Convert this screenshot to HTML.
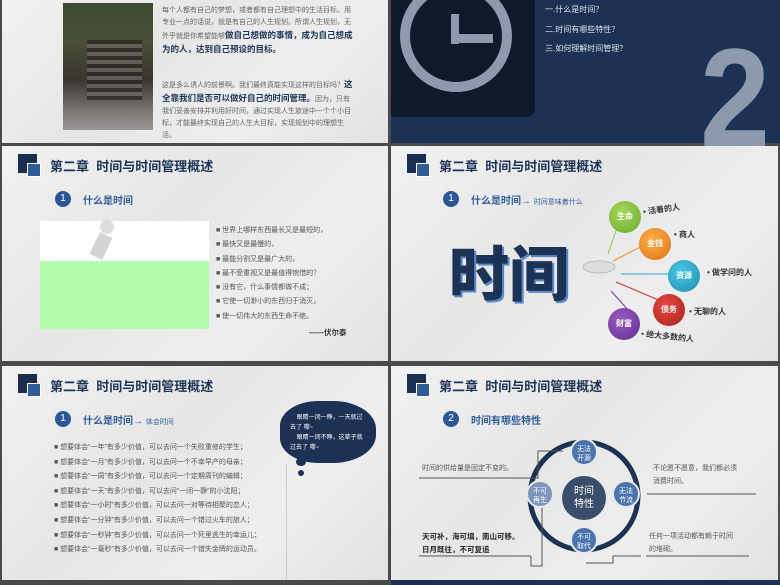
<!DOCTYPE html>
<html><head><meta charset="utf-8"><style>
*{margin:0;padding:0;box-sizing:border-box}
body{width:780px;height:585px;background:#4a4a4a;position:relative;overflow:hidden;font-family:"Liberation Sans","Noto Sans CJK SC",sans-serif}
.p{position:absolute;background:linear-gradient(135deg,#f1f1f1 0%,#e6e6e6 40%,#eeeeee 70%,#e2e2e2 100%);overflow:hidden}
.a{position:absolute;white-space:nowrap}
.hd{position:absolute;left:16px;top:8px}
.hd .s1{position:absolute;left:0;top:0;width:19px;height:19px;background:#1b2e4f}
.hd .s2{position:absolute;left:9px;top:9px;width:14px;height:14px;background:#2f5d9a;border:1px solid #fff}
.hd .t{position:absolute;left:32px;top:2px;font-size:13px;font-weight:bold;color:#1d3356;white-space:nowrap}
.num{position:absolute;width:16px;height:16px;border-radius:50%;background:#2b5796;color:#fff;font-size:10px;text-align:center;line-height:16px}
.sub{position:absolute;font-size:10px;font-weight:bold;color:#2f5d9a;white-space:nowrap}
.li{font-size:7px;color:#555;line-height:14.3px;white-space:nowrap}
.ci{position:absolute;border-radius:50%;color:#fff;font-size:8px;font-weight:bold;text-align:center}
</style></head><body>

<!-- top-left -->
<div class="p" style="left:2px;top:0;width:386px;height:143px">
  <div class="a" style="left:61px;top:3px;width:90px;height:127px;background:linear-gradient(180deg,#3c4a32 0%,#4a5038 30%,#3a3530 60%,#7a7672 85%,#9a9896 100%)"></div>
  <div class="a" style="left:85px;top:40px;width:55px;height:60px;background:repeating-linear-gradient(180deg,#2a2825 0 4px,#6a655f 4px 8px);opacity:.8"></div>
  <div class="a" style="left:160px;top:5px;font-size:7px;color:#666;line-height:12px;white-space:normal;width:192px">每个人都有自己的梦想，或者都有自己理想中的生活目标。用专业一点的话说，就是有自己的人生规划。所谓人生规划，无外乎就是你希望能够<b style="color:#1d3356;font-size:8.5px">做自己想做的事情，成为自己想成为的人，达到自己预设的目标。</b></div>
  <div class="a" style="left:160px;top:78px;font-size:7px;color:#666;line-height:12px;white-space:normal;width:192px">这是多么诱人的前景啊。我们最终真能实现这样的目标吗？<b style="color:#1d3356;font-size:8.5px">这全靠我们是否可以做好自己的时间管理。</b>因为，只有我们妥善安排并利用好时间，通过实现人生旅途中一个个小目标，才能最终实现自己的人生大目标，实现规划中的理想生活。</div>
</div>

<!-- top-right -->
<div class="a" style="left:391px;top:0;width:389px;height:143px;background:#1c3153"></div>
<div class="a" style="left:391px;top:0;width:144px;height:117px;background:#0e1a2c;border-radius:0 0 8px 0"></div>
<div class="a" style="left:400px;top:-20px;width:112px;height:112px;border:10px solid #8d9aad;border-radius:50%"></div>
<div class="a" style="left:451px;top:14px;width:8px;height:30px;background:#8d9aad"></div>
<div class="a" style="left:451px;top:34px;width:42px;height:9px;background:#8d9aad"></div>
<div class="a" style="left:545px;top:0;font-size:8px;color:#dde3ec;line-height:19.5px;white-space:nowrap">一.什么是时间？<br>二.时间有哪些特性？<br>三.如何理解时间管理？</div>
<div class="a" style="left:700px;top:28px;font-size:140px;font-weight:bold;color:#8d9aad;line-height:140px;transform:scaleX(.9);transform-origin:left">2</div>

<!-- middle-left -->
<div class="p" style="left:2px;top:146px;width:386px;height:215px">
  <div class="hd"><div class="s1"></div><div class="s2"></div><div class="t">第二章&nbsp;&nbsp;时间与时间管理概述</div></div>
  <div class="num" style="left:53px;top:45px">1</div>
  <div class="sub" style="left:81px;top:46px">什么是时间</div>
  <div class="a" style="left:38px;top:75px;width:169px;height:40px;background:#fff"></div>
  <div class="a" style="left:98px;top:74px;width:14px;height:14px;border-radius:50%;background:#ddd"></div>
  <div class="a" style="left:92px;top:88px;width:14px;height:24px;background:#d4d4d4;transform:rotate(25deg)"></div>
  <div class="a" style="left:38px;top:115px;width:169px;height:68px;background:#b3fcab"></div>
  <div class="a li" style="left:214px;top:78px">■ 世界上哪样东西最长又是最短的，<br>■ 最快又是最慢的，<br>■ 最能分割又是最广大的，<br>■ 最不受重视又是最值得惋惜的？<br>■ 没有它，什么事情都做不成；<br>■ 它使一切渺小的东西归于消灭，<br>■ 使一切伟大的东西生命不绝。</div>
  <div class="a" style="left:307px;top:181px;font-size:7.5px;font-weight:bold;color:#333">——伏尔泰</div>
</div>

<!-- middle-right -->
<div class="p" style="left:391px;top:146px;width:387px;height:215px">
  <div class="hd"><div class="s1"></div><div class="s2"></div><div class="t">第二章&nbsp;&nbsp;时间与时间管理概述</div></div>
  <div class="num" style="left:52px;top:45px">1</div>
  <div class="sub" style="left:80px;top:46px">什么是时间→ <span style="font-weight:normal;font-size:7px">时间意味着什么</span></div>
  <div class="a" style="left:58px;top:95px;font-size:60px;font-weight:900;color:#1d3356;text-shadow:2px 2px 0 #5a88c8;line-height:70px">时间</div>
  <svg class="a" style="left:0;top:0" width="387" height="215">
    <line x1="217" y1="108" x2="230" y2="70" stroke="#8dc63f"/>
    <line x1="222" y1="115" x2="255" y2="98" stroke="#f08a24"/>
    <line x1="230" y1="128" x2="280" y2="128" stroke="#2aa8c8"/>
    <line x1="225" y1="136" x2="270" y2="155" stroke="#d0312d"/>
    <line x1="220" y1="145" x2="238" y2="165" stroke="#6a3d9a"/>
    <ellipse cx="208" cy="121" rx="16" ry="6" fill="#ddd" stroke="#bbb"/>
  </svg>
  <div class="ci" style="left:218px;top:55px;width:32px;height:32px;line-height:32px;background:radial-gradient(circle at 40% 35%,#a6d95b,#6aa72a)">生命</div>
  <div class="ci" style="left:248px;top:82px;width:32px;height:32px;line-height:32px;background:radial-gradient(circle at 40% 35%,#ffae4a,#e07010)">金钱</div>
  <div class="ci" style="left:277px;top:114px;width:32px;height:32px;line-height:32px;background:radial-gradient(circle at 40% 35%,#4cc6e3,#1a8fb0)">资源</div>
  <div class="ci" style="left:262px;top:148px;width:32px;height:32px;line-height:32px;background:radial-gradient(circle at 40% 35%,#e84a42,#a8201c)">债务</div>
  <div class="ci" style="left:217px;top:162px;width:32px;height:32px;line-height:32px;background:radial-gradient(circle at 40% 35%,#9a5cc6,#5f2d8f)">财富</div>
  <div class="a" style="left:252px;top:58px;font-size:8px;font-weight:bold;color:#333;transform:rotate(-8deg)">• 活着的人</div>
  <div class="a" style="left:283px;top:83px;font-size:8px;font-weight:bold;color:#333">• 商人</div>
  <div class="a" style="left:316px;top:121px;font-size:8px;font-weight:bold;color:#333">• 做学问的人</div>
  <div class="a" style="left:298px;top:160px;font-size:8px;font-weight:bold;color:#333">• 无聊的人</div>
  <div class="a" style="left:250px;top:185px;font-size:8px;font-weight:bold;color:#333;transform:rotate(6deg)">• 绝大多数的人</div>
</div>

<!-- bottom-left -->
<div class="p" style="left:2px;top:366px;width:386px;height:214px">
  <div class="hd"><div class="s1"></div><div class="s2"></div><div class="t">第二章&nbsp;&nbsp;时间与时间管理概述</div></div>
  <div class="num" style="left:53px;top:45px">1</div>
  <div class="sub" style="left:81px;top:46px">什么是时间→ <span style="font-weight:normal;font-size:7px">体会时间</span></div>
  <div class="a li" style="left:52px;top:75px;line-height:14.6px">■ 想要体会“一年”有多少价值，可以去问一个失败重修的学生；<br>■ 想要体会“一月”有多少价值，可以去问一个不幸早产的母亲；<br>■ 想要体会“一周”有多少价值，可以去问一个定期周刊的编辑；<br>■ 想要体会“一天”有多少价值，可以去问“一闭一静”的小沈阳；<br>■ 想要体会“一小时”有多少价值，可以去问一对等待相聚的恋人；<br>■ 想要体会“一分钟”有多少价值，可以去问一个错过火车的旅人；<br>■ 想要体会“一秒钟”有多少价值，可以去问一个死里逃生的幸运儿；<br>■ 想要体会“一毫秒”有多少价值，可以去问一个错失金牌的运动员。</div>
  <div class="a" style="left:284px;top:98px;width:86px;height:118px;border-left:1px solid #ccc"></div>
  <div class="a" style="left:278px;top:35px;width:96px;height:62px;background:#1c3153;border-radius:40% 45% 45% 40%"></div>
  <div class="a" style="left:294px;top:92px;width:10px;height:8px;background:#1c3153;border-radius:50%"></div>
  <div class="a" style="left:296px;top:104px;width:6px;height:6px;background:#1c3153;border-radius:50%"></div>
  <div class="a" style="left:288px;top:47px;font-size:6px;color:#fff;line-height:10px;width:78px;white-space:normal">&nbsp;&nbsp;&nbsp;&nbsp;眼睛一闭一睁，一天就过去了 嚟~<br>&nbsp;&nbsp;&nbsp;&nbsp;眼睛一闭不睁，这辈子就过去了 嚟~</div>
</div>

<!-- bottom-right -->
<div class="p" style="left:391px;top:366px;width:387px;height:214px">
  <div class="hd"><div class="s1"></div><div class="s2"></div><div class="t">第二章&nbsp;&nbsp;时间与时间管理概述</div></div>
  <div class="num" style="left:52px;top:45px">2</div>
  <div class="sub" style="left:80px;top:46px">时间有哪些特性</div>
  <svg class="a" style="left:0;top:0" width="387" height="214">
    <circle cx="193" cy="130" r="54" fill="none" stroke="#1c3153" stroke-width="5"/>
    <g stroke="#555" stroke-width="1" fill="none">
      <polyline points="28,112 145,112"/><polyline points="145,112 147,112 147,85 172,85"/>
      <polyline points="256,128 365,128"/>
      <polyline points="28,190 140,190"/><polyline points="140,190 140,200 151,200 151,140"/>
      <polyline points="195,197 222,197 222,190 250,190"/><polyline points="255,190 358,190"/>
    </g>
  </svg>
  <div class="ci" style="left:171px;top:110px;width:44px;height:44px;background:#3a4d6a;font-size:10px;font-weight:normal;line-height:13px;padding-top:9px">时间<br>特性</div>
  <div class="ci" style="left:179px;top:72px;width:28px;height:28px;background:#4a74ad;font-weight:normal;font-size:7px;line-height:9px;padding-top:5px;border:2px solid #e8e8e8">无法<br>开源</div>
  <div class="ci" style="left:221px;top:114px;width:28px;height:28px;background:#4a74ad;font-weight:normal;font-size:7px;line-height:9px;padding-top:5px;border:2px solid #e8e8e8">无法<br>节流</div>
  <div class="ci" style="left:135px;top:114px;width:28px;height:28px;background:#7b95bd;font-weight:normal;font-size:7px;line-height:9px;padding-top:5px;border:2px solid #e8e8e8">不可<br>再生</div>
  <div class="ci" style="left:179px;top:160px;width:28px;height:28px;background:#4a74ad;font-weight:normal;font-size:7px;line-height:9px;padding-top:5px;border:2px solid #e8e8e8">不可<br>取代</div>
  <div class="a" style="left:31px;top:97px;font-size:7px;color:#555">时间的供给量是固定不变的。</div>
  <div class="a" style="left:262px;top:96px;font-size:7px;color:#555;line-height:13px">不论愿不愿意，我们都必须<br>消费时间。</div>
  <div class="a" style="left:31px;top:164px;font-size:7.5px;font-weight:bold;color:#222;line-height:13px">天可补，海可填，南山可移。<br>日月既往，不可复追</div>
  <div class="a" style="left:258px;top:164px;font-size:7px;color:#555;line-height:13px">任何一项活动都有赖于时间<br>的堆砌。</div>
</div>
<div class="a" style="left:391px;top:580px;width:389px;height:5px;background:#1c3153"></div>
</body></html>
